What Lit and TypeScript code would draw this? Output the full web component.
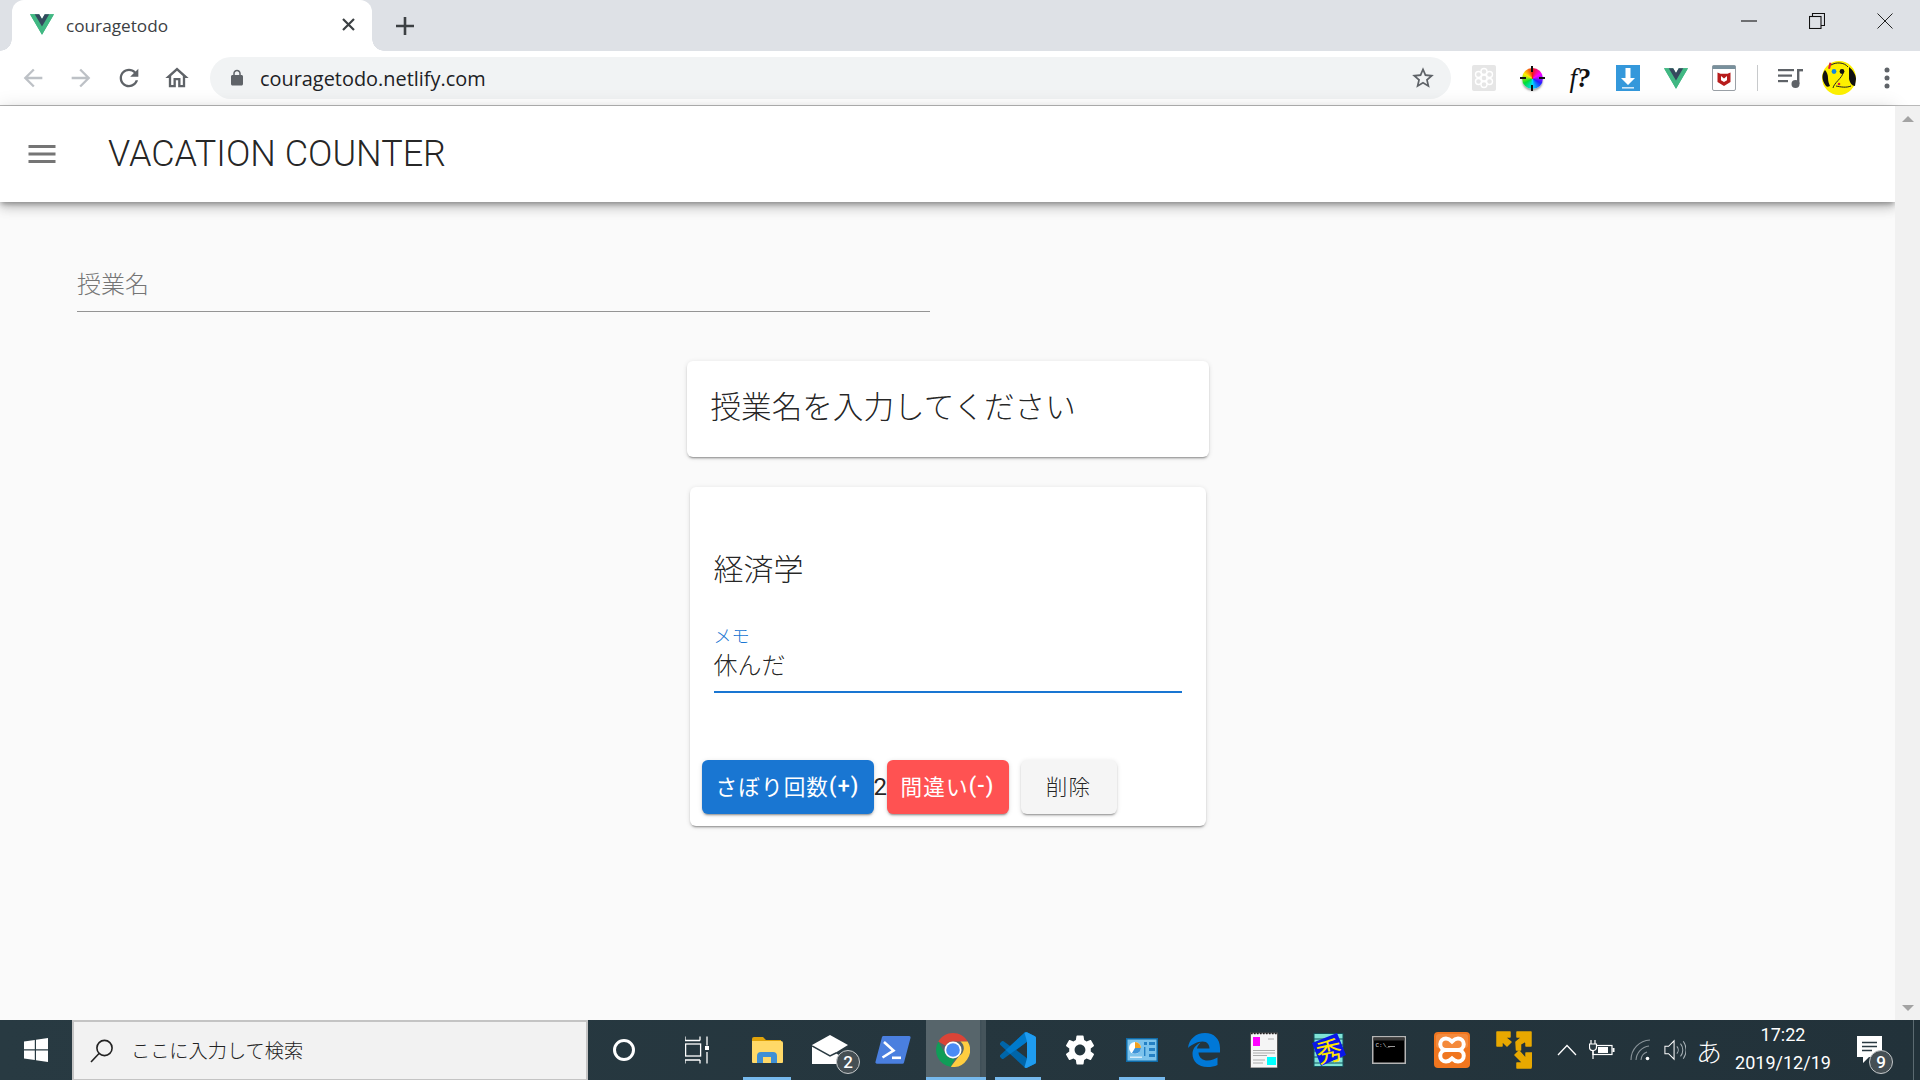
import { LitElement, html, css, svg, unsafeCSS } from "lit";
import { customElement } from "lit/decorators.js";

const CJK = `Roboto, "Noto Sans CJK JP", sans-serif`;

const mat = (d: string, size: number, color: string) => html`<svg
  width=${size} height=${size} viewBox="0 0 24 24" fill=${color}>${svg`<path d=${d}></path>`}</svg>`;

const PATHS = {
  back: "M20 11H7.83l5.59-5.59L12 4l-8 8 8 8 1.41-1.41L7.83 13H20v-2z",
  forward: "M12 4l-1.41 1.41L16.17 11H4v2h12.17l-5.58 5.59L12 20l8-8z",
  reload: "M17.65 6.35C16.2 4.9 14.21 4 12 4c-4.42 0-7.99 3.58-7.99 8s3.57 8 7.99 8c3.73 0 6.84-2.55 7.73-6h-2.08c-.82 2.33-3.04 4-5.65 4-3.31 0-6-2.69-6-6s2.69-6 6-6c1.66 0 3.14.69 4.22 1.78L13 11h7V4l-2.35 2.35z",
  home: "M12 5.69l5 4.5V18h-2v-6H9v6H7v-7.81l5-4.5M12 3L2 12h3v8h6v-6h2v6h6v-8h3L12 3z",
  star: "M22 9.24l-7.19-.62L12 2 9.19 8.63 2 9.24l5.46 4.73L5.82 21 12 17.27 18.18 21l-1.63-7.03L22 9.24zM12 15.4l-3.76 2.27 1-4.28-3.32-2.88 4.38-.38L12 6.1l1.71 4.04 4.38.38-3.32 2.88 1 4.28L12 15.4z",
  lock: "M18 8h-1V6c0-2.76-2.24-5-5-5S7 3.24 7 6v2H6c-1.1 0-2 .9-2 2v10c0 1.1.9 2 2 2h12c1.1 0 2-.9 2-2V10c0-1.1-.9-2-2-2zM9 6c0-1.66 1.34-3 3-3s3 1.34 3 3v2H9V6z",
  menu: "M3 18h18v-2H3v2zm0-5h18v-2H3v2zm0-7v2h18V6H3z",
  gear: "M19.14 12.94c.04-.3.06-.61.06-.94 0-.32-.02-.64-.07-.94l2.03-1.58c.18-.14.23-.41.12-.61l-1.92-3.32c-.12-.22-.37-.29-.59-.22l-2.39.96c-.5-.38-1.03-.7-1.62-.94l-.36-2.54c-.04-.24-.24-.41-.48-.41h-3.84c-.24 0-.43.17-.47.41l-.36 2.54c-.59.24-1.13.57-1.62.94l-2.39-.96c-.22-.08-.47 0-.59.22L2.74 8.87c-.12.21-.08.47.12.61l2.03 1.58c-.05.3-.09.63-.09.94s.02.64.07.94l-2.03 1.58c-.18.14-.23.41-.12.61l1.92 3.32c.12.22.37.29.59.22l2.39-.96c.5.38 1.03.7 1.62.94l.36 2.54c.05.24.24.41.48.41h3.84c.24 0 .44-.17.47-.41l.36-2.54c.59-.24 1.13-.56 1.62-.94l2.39.96c.22.08.47 0 .59-.22l1.92-3.32c.12-.22.07-.47-.12-.61l-2.01-1.58zM12 15.6c-1.98 0-3.6-1.62-3.6-3.6s1.62-3.6 3.6-3.6 3.6 1.62 3.6 3.6-1.62 3.6-3.6 3.6z",
};

const vue = (w: number, h: number) => html`<svg width=${w} height=${h} viewBox="0 0 256 221">
  <path fill="#41b883" d="M204.8 0H256L128 220.8 0 0h97.92L128 51.2 157.44 0h47.36z"></path>
  <path fill="#41b883" d="M0 0l128 220.8L256 0h-51.2L128 132.48 50.56 0H0z"></path>
  <path fill="#35495e" d="M50.56 0L128 133.12 204.8 0h-47.36L128 51.2 97.92 0H50.56z"></path>
</svg>`;

const flower = html`<svg width="24" height="26" viewBox="0 0 24 26">
  <rect width="24" height="26" rx="2" fill="#e6e6e6"></rect>
  <g fill="none" stroke="#fff" stroke-width="1.4">
    <circle cx="12" cy="13" r="3"></circle>
    <circle cx="12" cy="6.5" r="3"></circle><circle cx="12" cy="19.5" r="3"></circle>
    <circle cx="6.5" cy="9.5" r="3"></circle><circle cx="17.5" cy="9.5" r="3"></circle>
    <circle cx="6.5" cy="16.5" r="3"></circle><circle cx="17.5" cy="16.5" r="3"></circle>
  </g>
</svg>`;

const download = html`<svg width="24" height="26" viewBox="0 0 24 26">
  <rect width="24" height="26" fill="#3498db"></rect>
  <path fill="#fff" d="M9.5 3h5v10h4.5L12 20 5 13h4.5z"></path>
  <rect x="6" y="22" width="12" height="1.6" fill="#cfe6f7"></rect>
</svg>`;

const mcafee = html`<svg width="24" height="26" viewBox="0 0 24 26">
  <rect x=".5" y=".5" width="23" height="25" rx="1.5" fill="#fff" stroke="#9aa0a6"></rect>
  <rect x=".5" y=".5" width="23" height="3.5" fill="#78909c"></rect>
  <path fill="#b71c1c" d="M5.5 7.5l3 1.2h7l3-1.2v9.5L12 21l-6.5-4zM9 11v4.2l3 1.9 3-1.9V11l-3 2.6z"></path>
</svg>`;

const queue = html`<svg width="26" height="24" viewBox="0 0 26 24" fill="#5f6368">
  <rect x="0" y="3" width="16" height="2.2"></rect>
  <rect x="0" y="8.5" width="14" height="2.2"></rect>
  <rect x="0" y="14" width="10" height="2.2"></rect>
  <rect x="19" y="3" width="2.4" height="15"></rect>
  <rect x="19" y="3" width="6" height="2.4"></rect>
  <circle cx="17.5" cy="18" r="4"></circle>
</svg>`;

const avatar = html`<svg width="34" height="34" viewBox="0 0 34 34">
  <circle cx="17" cy="17" r="17" fill="#fdf000"></circle>
  <path fill="#111" d="M3 9c2 2 3 5 3 8 0 3 1 6 2 8-2 1-3 1-4 0C0 20-1 14 3 9zM27 6c4 3 7 8 7 12l-1 7c-3 0-5-3-6-7z"></path>
  <path fill="none" stroke="#222" stroke-width="1" d="M9 4c5-3 13-3 17 2M21 12c-1 5-9 10-10 15M14 25c5 1 10 2 15 0"></path>
  <circle cx="12" cy="10.5" r="2.400" fill="#1188dd"></circle>
  <circle cx="20" cy="10.500" r="2.400" fill="#111"></circle>
  <path fill="#d81b3c" d="M7.500 1.500l2 .5-1.500 6-2-.5z"></path>
  <circle cx="17" cy="23" r="1.300" fill="#d81b3c"></circle>
</svg>`;

const winLogo = html`<svg width="24" height="24" viewBox="0 0 24 24" fill="#fff">
  <path d="M0 3.4l10.8-1.5v9.4H0zM12 1.7L24 0v11.3H12zM0 12.6h10.8v9.5L0 20.6zM12 12.6h12V24l-12-1.7z"></path>
</svg>`;

const searchIcon = html`<svg width="24" height="24" viewBox="0 0 24 24" fill="none" stroke="#222" stroke-width="1.6">
  <circle cx="14.5" cy="9" r="7.6"></circle><path d="M9 14.5L1 23"></path>
</svg>`;

const cortana = html`<svg width="24" height="24" viewBox="0 0 24 24" fill="none" stroke="#fff" stroke-width="3">
  <circle cx="12" cy="12" r="9.5"></circle>
</svg>`;

const taskView = html`<svg width="24" height="28" viewBox="0 0 24 28" fill="none" stroke="#fff" stroke-width="1.3">
  <path d="M0 4.5h15M15 .5v4M0 .5v4M0 24h15M0 27.5V24M15 27.5V24"></path>
  <rect x=".6" y="8" width="15" height="12"></rect>
  <path d="M22 .5v9M22 16v11.5"></path>
  <rect x="20" y="10" width="4" height="4" fill="#fff" stroke="none"></rect>
</svg>`;

const explorer = html`<svg width="32" height="28" viewBox="0 0 32 28">
  <path fill="#e0a30a" d="M1 3a2 2 0 0 1 2-2h9l3 3h15v6H1z"></path>
  <path fill="#ffd968" d="M1 5h29a2 2 0 0 1 2 2v19a1 1 0 0 1-1 1H2a1 1 0 0 1-1-1z"></path>
  <path fill="#3f8fd4" d="M6 27v-7a4 4 0 0 1 4-4h12a4 4 0 0 1 4 4v7h-6v-6h-8v6z"></path>
</svg>`;

const mail = html`<svg width="36" height="30" viewBox="0 0 36 30">
  <path fill="#fff" d="M0 10L18 0l18 10v19H0z"></path>
  <path fill="none" stroke="#2a3a42" stroke-width="1.500" d="M0 11l18 10 6-3"></path>
  <path fill="#2a3a42" d="M36 10L23 18l6 3 7-4z"></path>
</svg>`;

const powershell = html`<svg width="36" height="28" viewBox="0 0 36 28">
  <path fill="#4a7fdf" d="M7 1a1.6 1.6 0 0 1 1.5-1H34a1.5 1.5 0 0 1 1.5 2L29 26.5a1.6 1.6 0 0 1-1.5 1.2H2a1.5 1.5 0 0 1-1.5-2z"></path>
  <path fill="none" stroke="#fff" stroke-width="2.6" d="M9 6l9.5 8.5-11 7"></path>
  <rect x="17" y="20.5" width="9" height="2.6" fill="#fff"></rect>
</svg>`;

const chrome = html`<svg width="34" height="34" viewBox="4 4 40 40">
  <path fill="#db4437" d="M6.68 14A20 20 0 0 1 41.32 14H24A10 10 0 0 0 15.34 19z"></path>
  <path fill="#0f9d58" d="M6.68 14L15.34 29A10 10 0 0 0 26.6 33.66L21.4 43.83A20 20 0 0 1 6.68 14z"></path>
  <path fill="#ffcd40" d="M41.32 14A20 20 0 0 1 21.4 43.83L31.1 31A10 10 0 0 0 32.66 14z"></path>
  <circle cx="24" cy="24" r="10" fill="#fff"></circle>
  <circle cx="24" cy="24" r="8" fill="#4b8bf5"></circle>
</svg>`;

const vscode = html`<svg width="36" height="38" viewBox="0 0 100 100">
  <path fill="#0065a9" fill-rule="evenodd" d="M96 11L75 1a6 6 0 0 0-7 1L28 39 10 26a4 4 0 0 0-5 0l-4 4a4 4 0 0 0 0 6l15 14L1 64a4 4 0 0 0 0 6l4 4a4 4 0 0 0 5 0l18-13 40 37a6 6 0 0 0 7 1l21-10a6 6 0 0 0 4-5V16a6 6 0 0 0-4-5zM75 27L45 50l30 23z"></path>
  <path fill="#007acc" d="M68 2L16 50l12 11L75 27V1a6 6 0 0 0-7 1z"></path>
  <path fill="#1f9cf0" d="M75 1l21 10a6 6 0 0 1 4 5v68a6 6 0 0 1-4 5L75 99a6 6 0 0 1-7-1l7-25z"></path>
  <path fill="#1f9cf0" d="M75 1L68 2l7 25z"></path>
</svg>`;

const panel = html`<svg width="32" height="24" viewBox="0 0 32 24">
  <rect width="32" height="24" fill="#0f6ba8"></rect>
  <rect x="1.5" y="1.5" width="29" height="21" fill="#7cc3ec"></rect>
  <circle cx="9" cy="10" r="6" fill="#fff"></circle>
  <path fill="#f0a020" d="M9 10V4a6 6 0 0 1 6 6z"></path>
  <path fill="#3d93d8" d="M9 10h6a6 6 0 0 1-9 5z"></path>
  <g fill="#2480c4">
    <rect x="18" y="4" width="3" height="3"></rect><rect x="23" y="4" width="6" height="3"></rect>
    <rect x="23" y="10" width="6" height="3"></rect><rect x="23" y="16" width="6" height="3"></rect>
    <rect x="18" y="9" width="1.4" height="9"></rect>
  </g>
  <rect x="4" y="18.500" width="12" height="1.500" fill="#d5ecf9"></rect>
</svg>`;

const edge = html`<svg width="32" height="34" viewBox="0 0 32 34">
  <path fill="#0078d7" d="M0 15C1 6 8 0 17 0c9 0 15 6 15 15v4.5H10.5c.3 5.5 4.5 8 9 8 4 0 7.500-1.500 10-3v7.500c-2.800 1.500-6.500 2-10 2C10 34 4.500 28 4.500 21c0-5 3-9 8-11.500-2.500 3-3.200 4.500-3.500 6H21.500c0-3.500-2-7-7-7C9 8.500 3 12 0 15z"></path>
</svg>`;

const notepad = html`<svg width="28" height="36" viewBox="0 0 28 36">
  <rect x=".5" y="1" width="27" height="35" fill="#f5f5f5" stroke="#555"></rect>
  <path stroke="#222" stroke-width="1.4" stroke-dasharray="1.6 1.4" d="M1 1.500h26"></path>
  <rect x="3" y="5" width="7" height="9" fill="#f0f"></rect>
  <rect x="17" y="25" width="9" height="8" fill="#0ff"></rect>
  <g stroke="#aaa" stroke-width="1">
    <path d="M3 18.500h22M3 21h22M3 23.500h14M3 28h12M3 31h10"></path>
    <path d="M18 7h6"></path>
  </g>
</svg>`;

const hidemaru = html`<svg width="34" height="34" viewBox="0 0 34 34">
  <rect x="2" y=".5" width="29" height="33" fill="#7fe3d6" stroke="#13505a"></rect>
  <g stroke="#13505a" stroke-width="1"><path d="M2 6h29M2 12h29M2 18h29M2 24h29M2 30h29"></path></g>
  <path fill="#0a17e8" d="M0 10L25 0l9 22-25 11z"></path>
</svg>`;

const cmd = html`<svg width="34" height="28" viewBox="0 0 34 28">
  <rect x=".75" y=".75" width="32.500" height="26.500" fill="#000" stroke="#b5b5b5" stroke-width="1.500"></rect>
  <rect x="1.500" y="1.500" width="31" height="3" fill="#3a3a3a"></rect>
  <text x="3.500" y="11" font-size="6" font-family="Liberation Mono" fill="#d8d8d8">C:\\_</text>
  <rect x="16" y="10" width="7" height="1" fill="#999"></rect>
</svg>`;

const xampp = html`<svg width="36" height="36" viewBox="0 0 36 36">
  <rect width="36" height="36" rx="4" fill="#f0761f"></rect>
  <rect x="2" y="2" width="32" height="14" rx="3" fill="#f48a3c"></rect>
  <g fill="none" stroke="#fff" stroke-width="4">
    <path d="M18 9.500c-2-2-4-3-6-3a5.500 5.500 0 0 0 0 11.500h12a5.500 5.500 0 0 0 0-11.500c-2 0-4 1-6 3z"></path>
    <path d="M18 26.500c-2 2-4 3-6 3a5.500 5.500 0 0 1 0-11.500h12a5.500 5.500 0 0 1 0 11.500c-2 0-4-1-6-3z"></path>
  </g>
</svg>`;

const vmware = html`<svg width="36" height="38" viewBox="0 0 36 38" fill="#e8a800" stroke="#e8a800" stroke-width="1.500" stroke-linejoin="round">
  <path d="M1 1h13v5H9l6 5-4 4-5-5v5H1z"></path>
  <path d="M35 1H21v5h5l-6 5 .5 8h4v-6l5.500-3v5h5z"></path>
  <path d="M35 37H21v-5h6l-8-8 4-4 7 8v-6h7z"></path>
</svg>`;

const chevron = html`<svg width="20" height="12" viewBox="0 0 20 12" fill="none" stroke="#fff" stroke-width="1.300">
  <path d="M1 11L10 1.500 19 11"></path>
</svg>`;

const battery = html`<svg width="26" height="20" viewBox="0 0 26 20" fill="none" stroke="#fff" stroke-width="1.200">
  <rect x="4" y="5.500" width="19" height="9"></rect>
  <rect x="9" y="7" width="10" height="6" fill="#fff" stroke="none"></rect>
  <rect x="23.500" y="8" width="2" height="4" fill="#fff" stroke="none"></rect>
  <path d="M2 0v4M6 0v4M.5 4h7v3a3.500 3.500 0 0 1-7 0zM4 10v9" fill="#2a3a42"></path>
</svg>`;

const wifi = html`<svg width="22" height="22" viewBox="0 0 22 22" fill="none" stroke="#8a949a" stroke-width="1.100">
  <path d="M1 21A20 20 0 0 1 20 1M6 21A15 15 0 0 1 19 7M11 21a9 9 0 0 1 6-8"></path>
  <circle cx="17.500" cy="19.500" r="1.800" fill="#fff" stroke="none"></circle>
</svg>`;

const speaker = html`<svg width="24" height="22" viewBox="0 0 24 22" fill="none" stroke="#fff" stroke-width="1.100">
  <path d="M1 7h4l6-6v20l-6-6H1z"></path>
  <path stroke="#a9b2b7" d="M14 7a6 6 0 0 1 0 8M18 4a11 11 0 0 1 0 14M21 1.500a16 16 0 0 1 0 19"></path>
</svg>`;

const notif = html`<svg width="26" height="28" viewBox="0 0 26 28">
  <path fill="#fff" d="M0 0h25v21H12l-6 6v-6H0z"></path>
  <g stroke="#2a3a42" stroke-width="1.500"><path d="M5 6.500h15M5 10.500h15M5 14.500h10"></path></g>
</svg>`;

@customElement("app-root")
export class AppRoot extends LitElement {
  static styles = css`
    :host {
      display: flex;
      flex-direction: column;
      width: 1920px;
      height: 1080px;
      overflow: hidden;
      font-family: ${unsafeCSS(CJK)};
    }

    .tabstrip { height: 51px; flex: none; background: #dee1e6; display: flex; padding-left: 12px; }
    .tab {
      position: relative;
      width: 360px;
      background: #fff;
      border-radius: 12px 12px 0 0;
      display: flex;
      align-items: center;
      padding: 0 17px 2px 18px;
      box-sizing: border-box;
    }
    .tab::before, .tab::after {
      content: "";
      position: absolute;
      bottom: 0;
      width: 12px;
      height: 12px;
    }
    .tab::before { left: -12px; background: radial-gradient(circle at 0 0, #dee1e6 11.5px, #fff 12px); }
    .tab::after { right: -12px; background: radial-gradient(circle at 100% 0, #dee1e6 11.5px, #fff 12px); }
    .tab-title {
      flex: 1;
      margin-left: 12px;
      padding-top: 2px;
      font: 17.2px "Open Sans", sans-serif;
      color: #3c4043;
    }
    .tab-close { display: block; width: 13px; height: 13px; }
    .newtab { margin-left: 24px; align-self: center; display: flex; }
    .winctl { margin-left: auto; display: flex; align-items: flex-start; padding-top: 13px; padding-right: 1px; }
    .winctl span { width: 68px; display: flex; justify-content: center; }

    .toolbar {
      height: 54px;
      flex: none;
      box-sizing: content-box;
      background: #fff;
      border-bottom: 1px solid #b9b9b9;
      display: flex;
      align-items: center;
    }
    .nav { width: 48px; display: flex; justify-content: center; }
    .nav-first { margin-left: 9px; }
    .omnibox {
      margin-left: 9px;
      width: 1241px;
      height: 42px;
      background: #f1f3f4;
      border-radius: 21px;
      display: flex;
      align-items: center;
      padding: 0 15px 0 18px;
      box-sizing: border-box;
    }
    .url { flex: 1; margin-left: 14px; font: 19.9px "Open Sans", sans-serif; color: #202124; }
    .exts { display: flex; align-items: center; margin-left: 9px; }
    .ext { width: 48px; display: flex; justify-content: center; align-items: center; }
    .ext-f { font: italic 27px "Liberation Serif", serif; color: #111; }
    .ext-f b { font-weight: 700; }
    .wheel {
      width: 21px;
      height: 21px;
      border-radius: 50%;
      background: conic-gradient(#f01818, #f0f 60deg, #22f 120deg, #0df 180deg, #0d3 240deg, #fe0 300deg, #f01818);
      box-shadow: 0 2px 2px rgba(0,0,0,.35);
      position: relative;
    }
    .wheel::before {
      content: "";
      position: absolute;
      left: -2px;
      right: -2px;
      top: 9.5px;
      height: 2px;
      background: linear-gradient(90deg, #111 6px, transparent 6px, transparent 19px, #111 19px);
    }
    .wheel::after {
      content: "";
      position: absolute;
      top: -2px;
      bottom: -2px;
      left: 9.5px;
      width: 2px;
      background: linear-gradient(#111 6px, transparent 6px, transparent 19px, #111 19px);
    }
    .sep { width: 1px; height: 26px; background: #c8cacc; margin: 0 9px 0 9px; }
    .ext-narrow { width: 48px; }

    .body { flex: 1; min-height: 0; display: flex; background: #fafafa; }
    .page { flex: 1; min-width: 0; display: flex; flex-direction: column; align-items: center; }
    .appbar {
      align-self: stretch;
      height: 96px;
      flex: none;
      background: #fff;
      display: flex;
      align-items: center;
      box-shadow: 0 3px 5px -1px rgba(0,0,0,.3), 0 6px 10px 0 rgba(0,0,0,.16), 0 1px 18px 0 rgba(0,0,0,.12);
    }
    .menu-btn { display: flex; margin-left: 24px; }
    .appbar-title {
      margin-left: 48px;
      font: 300 36px Roboto, sans-serif;
      color: rgba(0,0,0,.87);
    }
    .class-input {
      align-self: flex-start;
      margin: 66px 0 0 77px;
      padding-top: 1px;
      width: 853px;
      height: 44px;
      box-sizing: border-box;
      border-bottom: 1px solid #949494;
      font-size: 24px;
      font-weight: 300;
      line-height: 32px;
      color: #757575;
    }
    .card {
      background: #fff;
      border-radius: 6px;
      box-shadow: 0 3px 1px -2px rgba(0,0,0,.2), 0 2px 2px 0 rgba(0,0,0,.14), 0 1px 5px 0 rgba(0,0,0,.12);
      box-sizing: border-box;
    }
    .card-prompt {
      margin-top: 49px;
      width: 522px;
      height: 96px;
      padding: 0 24px 8px;
      display: flex;
      align-items: center;
      font-size: 30.6px;
      font-weight: 300;
      color: rgba(0,0,0,.87);
    }
    .card-subject {
      margin-top: 30px;
      width: 516px;
      height: 339px;
      display: flex;
      flex-direction: column;
    }
    .subject-title {
      margin: 61px 24px 0;
      font-size: 30px;
      font-weight: 300;
      line-height: 44px;
      color: rgba(0,0,0,.87);
    }
    .memo { margin: 33px 24px 0; border-bottom: 2px solid #1976d2; height: 68px; box-sizing: border-box; }
    .memo-label { font-size: 18px; font-weight: 300; line-height: 24px; color: #1976d2; }
    .memo-value { font-size: 24px; font-weight: 300; line-height: 32px; color: rgba(0,0,0,.87); margin-top: 1px; }
    .actions { margin-top: auto; padding: 0 12px 12px; display: flex; align-items: center; }
    .btn {
      height: 54px;
      border-radius: 6px;
      display: flex;
      align-items: center;
      justify-content: center;
      box-sizing: border-box;
      padding-bottom: 3px;
      font-size: 21.6px;
      font-weight: 400;
      letter-spacing: 1.1px;
      box-shadow: 0 3px 1px -2px rgba(0,0,0,.2), 0 2px 2px 0 rgba(0,0,0,.14), 0 1px 5px 0 rgba(0,0,0,.12);
    }
    .sym { font-weight: 500; }
    .btn-blue { background: #1976d2; color: #fff; width: 172px; }
    .btn-red { background: #ff5252; color: #fff; width: 122px; }
    .btn-grey { background: #f5f5f5; color: rgba(0,0,0,.87); width: 96px; margin-left: 12px; font-weight: 300; }
    .count { width: 13px; font-size: 24px; line-height: 32px; color: rgba(0,0,0,.87); }

    .scrollbar {
      width: 25px;
      flex: none;
      background: #f1f1f1;
      display: flex;
      flex-direction: column;
      justify-content: space-between;
      align-items: center;
      padding: 10px 0 9px;
      box-sizing: border-box;
    }
    .tri { width: 0; height: 0; border-left: 6px solid transparent; border-right: 6px solid transparent; }
    .tri-up { border-bottom: 6px solid #a3a3a3; }
    .tri-down { border-top: 6px solid #a3a3a3; }

    .taskbar {
      height: 60px;
      flex: none;
      background: linear-gradient(90deg, #283a42, #22323a);
      display: flex;
      align-items: center;
      color: #fff;
    }
    .start { width: 72px; display: flex; justify-content: center; }
    .search {
      width: 516px;
      height: 60px;
      box-sizing: border-box;
      background: #f2f2f2;
      border: 2px solid #c4c4c4;
      border-bottom-width: 1px;
      display: flex;
      align-items: center;
      padding: 0 0 0 16px;
      font-size: 19.2px;
      font-weight: 300;
      color: #222;
    }
    .search-text { margin-left: 17px; padding-bottom: 2px; }
    .cell {
      position: relative;
      height: 60px;
      flex: none;
      display: flex;
      align-items: center;
      justify-content: center;
      box-sizing: border-box;
    }
    .cell-active { background: linear-gradient(90deg, #57656b 54px, #3f4f57 54px, #3f4f57 55px, #45545b 56px); padding-right: 6px; }
    .bar { position: absolute; left: 9px; right: 9px; bottom: 0; height: 3px; background: #76b9ed; }
    .cell-active .bar { left: 0; right: 0; }
    .count-badge {
      position: absolute;
      width: 24px;
      height: 24px;
      box-sizing: border-box;
      border-radius: 50%;
      background: #454f54;
      border: 1px solid #c5c9cb;
      display: flex;
      align-items: center;
      justify-content: center;
      font-size: 17px;
      font-weight: 500;
      color: #fff;
    }
    .badge-mail { left: 36px; top: 30px; }
    .badge-notif { left: 35px; top: 30px; }
    .hide-glyph {
      position: absolute;
      left: 50%;
      top: 50%;
      font: 400 26px/1 "Noto Sans CJK JP", sans-serif;
      color: #ffe600;
      transform: translate(-50%, -50%) rotate(-12deg);
    }
    .ime { font-size: 26px; font-weight: 300; }
    .clock { text-align: center; font-size: 18px; font-weight: 400; line-height: 28px; padding-bottom: 2px; }
    .edge-line { width: 1px; height: 60px; background: #5b6a71; margin-left: 7px; }
  `;

  private appCells() {
    const cells = [
      { w: 72, icon: cortana },
      { w: 74, icon: taskView },
      { w: 66, icon: explorer, bar: true },
      { w: 60, icon: mail, badge: "2" },
      { w: 66, icon: powershell },
      { w: 60, icon: chrome, bar: true, active: true },
      { w: 64, icon: vscode, bar: true },
      { w: 60, icon: mat(PATHS.gear, 36, "#fff") },
      { w: 64, icon: panel, bar: true },
      { w: 60, icon: edge },
      { w: 60, icon: notepad },
      { w: 70, icon: hidemaru, hide: true },
      { w: 50, icon: cmd },
      { w: 76, icon: xampp },
      { w: 48, icon: vmware },
    ];
    return cells.map(
      (c) => html`<div class="cell ${c.active ? "cell-active" : ""}" style="width:${c.w}px">
        ${c.icon}
        ${c.hide ? html`<span class="hide-glyph">秀</span>` : ""}
        ${c.badge ? html`<span class="count-badge badge-mail">${c.badge}</span>` : ""}
        ${c.bar ? html`<span class="bar"></span>` : ""}
      </div>`
    );
  }

  render() {
    return html`
      <div class="tabstrip">
        <div class="tab">
          ${vue(24, 21)}
          <span class="tab-title">couragetodo</span>
          <svg class="tab-close" viewBox="0 0 13 13" stroke="#3c4043" stroke-width="2.2"><path d="M1 1l11 11M12 1L1 12"></path></svg>
        </div>
        <div class="newtab">
          <svg width="18" height="18" viewBox="0 0 18 18" stroke="#3c4043" stroke-width="2.6"><path d="M9 0v18M0 9h18"></path></svg>
        </div>
        <div class="winctl">
          <span><svg width="16" height="16" viewBox="0 0 16 16" stroke="#111" stroke-width="1.1"><path d="M0 8h16"></path></svg></span>
          <span><svg width="16" height="16" viewBox="0 0 16 16" fill="none" stroke="#111" stroke-width="1.1"><rect x=".5" y="3.500" width="11.500" height="12"></rect><path d="M3.500 3.500V.5H15.500V12.500H12"></path></svg></span>
          <span><svg width="16" height="16" viewBox="0 0 16 16" stroke="#222" stroke-width="1"><path d="M.5.5l15 15M15.500.5l-15 15"></path></svg></span>
        </div>
      </div>
      <div class="toolbar">
        <span class="nav nav-first">${mat(PATHS.back, 28, "#bdc1c6")}</span>
        <span class="nav">${mat(PATHS.forward, 28, "#bdc1c6")}</span>
        <span class="nav">${mat(PATHS.reload, 28, "#5f6368")}</span>
        <span class="nav">${mat(PATHS.home, 28, "#5f6368")}</span>
        <div class="omnibox">
          ${mat(PATHS.lock, 18, "#5f6368")}
          <span class="url">couragetodo.netlify.com</span>
          ${mat(PATHS.star, 26, "#5f6368")}
        </div>
        <div class="exts">
          <span class="ext">${flower}</span>
          <span class="ext"><span class="wheel"></span></span>
          <span class="ext ext-f">f<b>?</b></span>
          <span class="ext">${download}</span>
          <span class="ext">${vue(24, 21)}</span>
          <span class="ext">${mcafee}</span>
          <span class="sep"></span>
          <span class="ext">${queue}</span>
          <span class="ext">${avatar}</span>
          <span class="ext ext-narrow">${html`<svg width="6" height="22" viewBox="0 0 6 22" fill="#5f6368"><circle cx="3" cy="3" r="2.500"></circle><circle cx="3" cy="11" r="2.500"></circle><circle cx="3" cy="19" r="2.500"></circle></svg>`}</span>
        </div>
      </div>
      <div class="body">
        <div class="page">
          <header class="appbar">
            <span class="menu-btn">${mat(PATHS.menu, 36, "#757575")}</span>
            <span class="appbar-title">VACATION COUNTER</span>
          </header>
          <div class="class-input">授業名</div>
          <div class="card card-prompt">授業名を入力してください</div>
          <div class="card card-subject">
            <div class="subject-title">経済学</div>
            <div class="memo">
              <div class="memo-label">メモ</div>
              <div class="memo-value">休んだ</div>
            </div>
            <div class="actions">
              <div class="btn btn-blue">さぼり回数<span class="sym">(+)</span></div>
              <span class="count">2</span>
              <div class="btn btn-red">間違い<span class="sym">(-)</span></div>
              <div class="btn btn-grey">削除</div>
            </div>
          </div>
        </div>
        <div class="scrollbar"><span class="tri tri-up"></span><span class="tri tri-down"></span></div>
      </div>
      <div class="taskbar">
        <div class="start">${winLogo}</div>
        <div class="search">${searchIcon}<span class="search-text">ここに入力して検索</span></div>
        ${this.appCells()}
        <div class="cell" style="width:10px"></div>
        <div class="cell" style="width:38px">${chevron}</div>
        <div class="cell" style="width:32px">${battery}</div>
        <div class="cell" style="width:46px">${wifi}</div>
        <div class="cell" style="width:22px">${speaker}</div>
        <div class="cell ime" style="width:46px">あ</div>
        <div class="cell clock" style="width:102px"><div>17:22<br />2019/12/19</div></div>
        <div class="cell" style="width:72px">${notif}<span class="count-badge badge-notif">9</span></div>
        <span class="edge-line"></span>
      </div>
    `;
  }
}
